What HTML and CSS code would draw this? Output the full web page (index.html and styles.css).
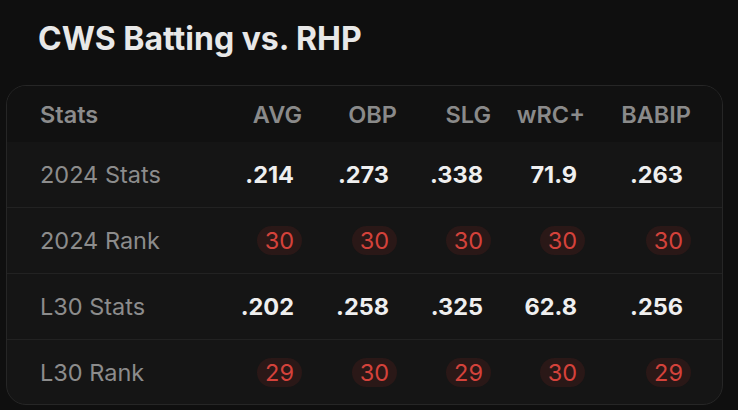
FILE: index.html
```html
<!DOCTYPE html>
<html lang="en">
<head>
<meta charset="utf-8">
<title>CWS Batting vs. RHP</title>
<link rel="stylesheet" href="styles.css">
</head>
<body>
<main class="panel">
  <h1 class="title">CWS Batting vs. RHP</h1>
  <div class="card">
    <div class="row head">
      <div class="label">Stats</div>
      <div class="cell"><span class="v">AVG</span></div>
      <div class="cell"><span class="v">OBP</span></div>
      <div class="cell"><span class="v">SLG</span></div>
      <div class="cell"><span class="v">wRC+</span></div>
      <div class="cell"><span class="v">BABIP</span></div>
    </div>
    <div class="row">
      <div class="label">2024 Stats</div>
      <div class="cell"><span class="v num">.214</span></div>
      <div class="cell"><span class="v num">.273</span></div>
      <div class="cell"><span class="v num">.338</span></div>
      <div class="cell"><span class="v num">71.9</span></div>
      <div class="cell"><span class="v num">.263</span></div>
    </div>
    <div class="row">
      <div class="label">2024 Rank</div>
      <div class="cell"><span class="v rank">30</span></div>
      <div class="cell"><span class="v rank">30</span></div>
      <div class="cell"><span class="v rank">30</span></div>
      <div class="cell"><span class="v rank">30</span></div>
      <div class="cell"><span class="v rank">30</span></div>
    </div>
    <div class="row">
      <div class="label">L30 Stats</div>
      <div class="cell"><span class="v num">.202</span></div>
      <div class="cell"><span class="v num">.258</span></div>
      <div class="cell"><span class="v num">.325</span></div>
      <div class="cell"><span class="v num">62.8</span></div>
      <div class="cell"><span class="v num">.256</span></div>
    </div>
    <div class="row last">
      <div class="label">L30 Rank</div>
      <div class="cell"><span class="v rank">29</span></div>
      <div class="cell"><span class="v rank">30</span></div>
      <div class="cell"><span class="v rank">29</span></div>
      <div class="cell"><span class="v rank">30</span></div>
      <div class="cell"><span class="v rank">29</span></div>
    </div>
  </div>
</main>
</body>
</html>
```
FILE: styles.css
```css
html, body {
  margin: 0;
  padding: 0;
  background: #0f0f0f;
}
body {
  font-family: Inter, "Noto Sans", sans-serif;
  width: 738px;
  height: 410px;
  overflow: hidden;
}
.panel {
  padding: 19px 15px 0 6px;
}
.title {
  margin: 0 0 0 32px;
  font-size: 32px;
  line-height: 39px;
  font-weight: 700;
  color: #e8e8e8;
  letter-spacing: 0;
}
.card {
  margin-top: 27px;
  border: 1px solid #262626;
  border-radius: 20px;
  overflow: hidden;
  background: #151515;
}
.row {
  display: grid;
  grid-template-columns: 1fr 95px 95px 94px 94px 106px;
  align-items: center;
  height: 65px;
  padding: 0 31px 0 33px;
  border-bottom: 1px solid #222222;
  font-size: 23.5px;
}
.row.last {
  border-bottom: none;
  height: 64px;
}
.row.head {
  height: 56px;
  background: #111111;
  border-bottom: none;
  font-weight: 600;
  color: #8a8a8a;
}
.label {
  color: #8c8c8c;
}
.head .label {
  font-weight: 600;
}
.cell {
  text-align: right;
}
.v {
  display: inline-block;
  padding: 0 8px;
  line-height: 29px;
}
.head .v {
  padding: 0;
}
.num {
  color: #efefef;
  font-weight: 700;
}
.rank {
  color: #d4423b;
  background: #2a1817;
  border-radius: 15px;
}
```
